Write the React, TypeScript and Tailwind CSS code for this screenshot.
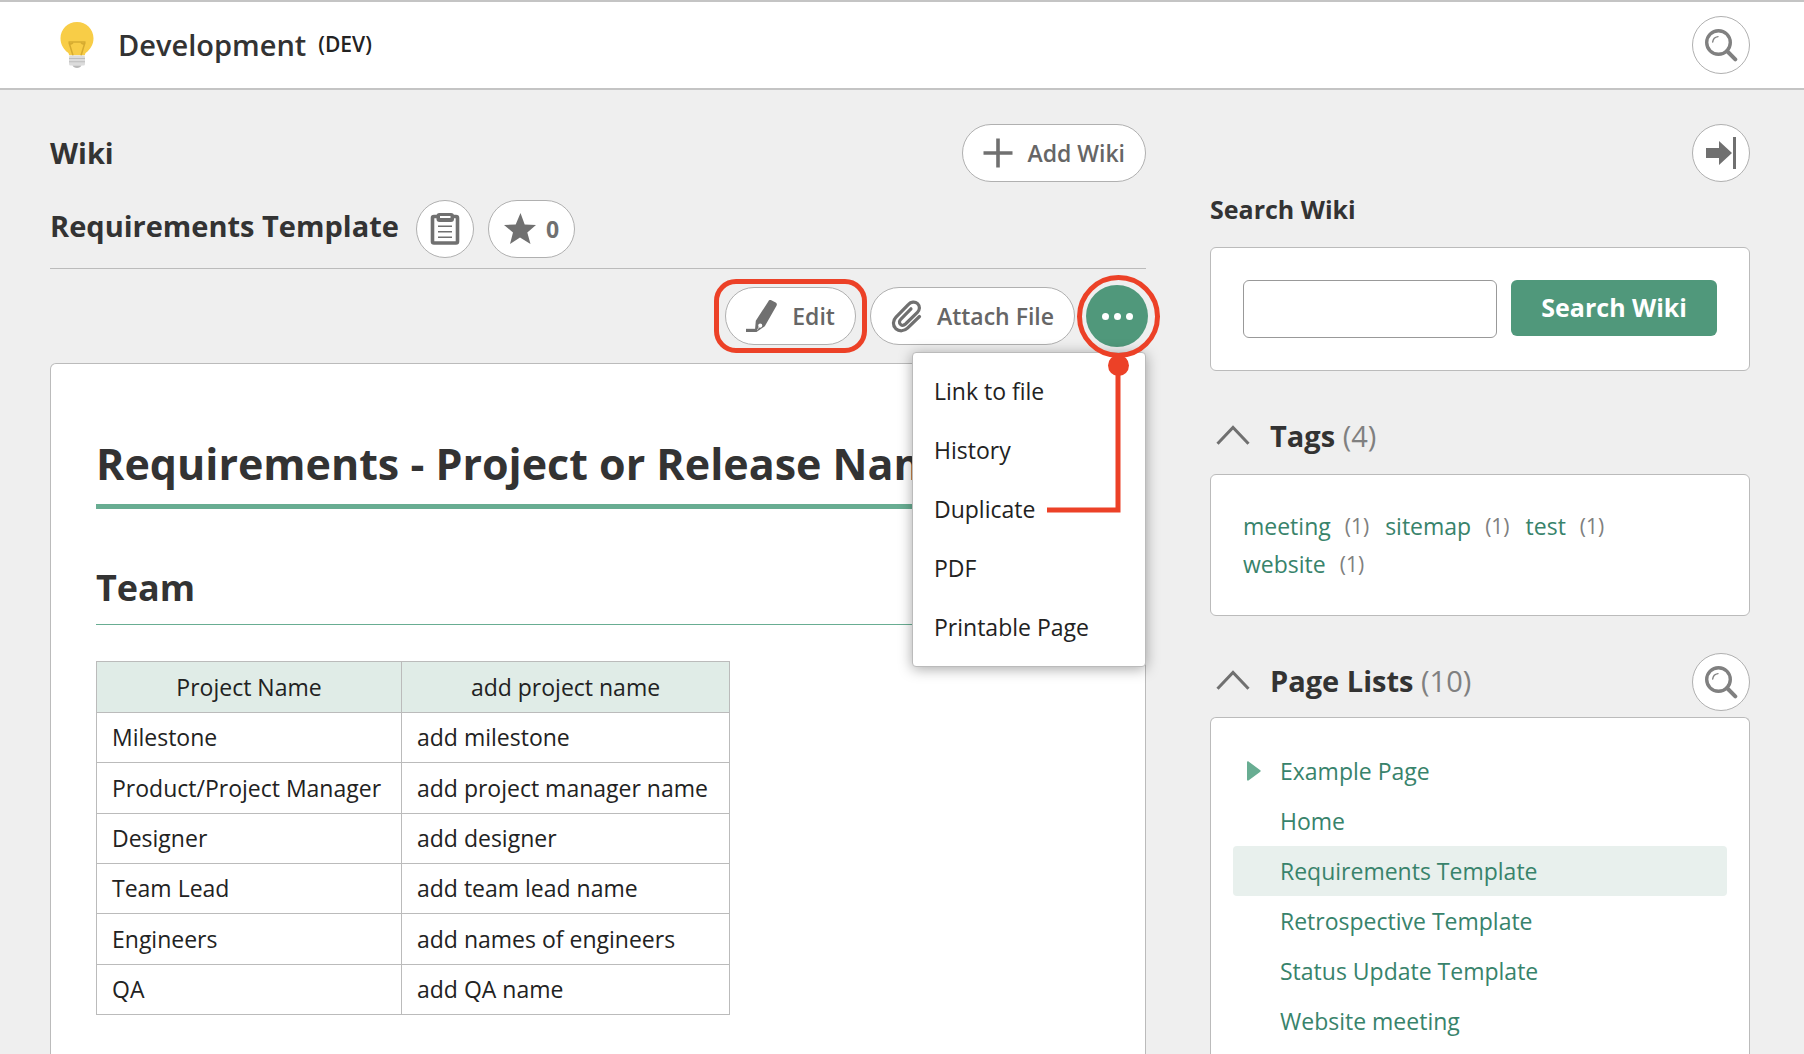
import type { ReactNode } from "react"

const TEAM_ROWS = [
  ["Milestone", "add milestone"],
  ["Product/Project Manager", "add project manager name"],
  ["Designer", "add designer"],
  ["Team Lead", "add team lead name"],
  ["Engineers", "add names of engineers"],
  ["QA", "add QA name"],
]

const MENU_ITEMS = ["Link to file", "History", "Duplicate", "PDF", "Printable Page"]

const TAGS = ["meeting", "sitemap", "test", "website"]

const PAGES = [
  { name: "Example Page", hasChildren: true },
  { name: "Home" },
  { name: "Requirements Template", active: true },
  { name: "Retrospective Template" },
  { name: "Status Update Template" },
  { name: "Website meeting" },
]

function BulbIcon() {
  return (
    <svg width="34" height="46" viewBox="0 0 34 46" aria-hidden="true">
      <path d="M17 0C7.600 0 .5 7.200 .5 16.300c0 6.700 3.600 11.500 7.300 14.300.9.700 1.200 1.500 1.200 2.700h16c0-1.200.3-2 1.200-2.700 3.700-2.800 7.300-7.600 7.300-14.300C33.500 7.200 26.400 0 17 0z" fill="#f8cd47" />
      <path d="M13 33.500L9 20.500q1.800 2.800 4 0M21 33.500l4-13q-1.800 2.800-4 0" fill="none" stroke="#d6ab30" strokeWidth="1.500" />
      <path d="M8.500 20h17" stroke="#d6ab30" strokeWidth="1.500" />
      <rect x="9" y="33.500" width="16" height="10" rx="1.500" fill="#dcdcdc" />
      <path d="M9 36.500h16M9 39.800h16" stroke="#bdbdbd" strokeWidth="1.100" />
      <path d="M12.500 43.500h9c-.8 1.600-2.200 2.400-4.500 2.400s-3.700-.8-4.500-2.400z" fill="#b9b9b9" />
    </svg>
  )
}

function SearchIcon() {
  return (
    <svg width="34" height="34" viewBox="0 0 34 34" fill="none" aria-hidden="true">
      <circle cx="14.500" cy="14.500" r="11.800" stroke="#808080" strokeWidth="3.400" />
      <path d="M8.700 14c.3-3 2.300-5 5.300-5.400" stroke="#808080" strokeWidth="1.400" strokeLinecap="round" />
      <path d="M23 23l8.300 8.300" stroke="#808080" strokeWidth="4" strokeLinecap="round" />
    </svg>
  )
}

function CollapseIcon() {
  return (
    <svg width="32" height="34" viewBox="0 0 32 34" fill="#707070" aria-hidden="true">
      <path d="M1 12h13V5l13 12-13 12v-7H1z" />
      <path d="M28 1h3v32h-3z" />
    </svg>
  )
}

function ClipboardIcon() {
  return (
    <svg width="30" height="34" viewBox="0 0 30 34" fill="none" aria-hidden="true">
      <rect x="2.500" y="4.500" width="25" height="26.500" rx="1.500" stroke="#707070" strokeWidth="3.600" />
      <rect x="6.500" y="1" width="17.500" height="9" rx="3" fill="#707070" />
      <rect x="10" y="4" width="10.500" height="2" fill="#fff" />
      <path d="M8 14.300h14M8 19.700h14M8 25.300h14" stroke="#707070" strokeWidth="1.500" />
    </svg>
  )
}

function StarIcon() {
  return (
    <svg width="32" height="32" viewBox="0 0 32 32" fill="#707070" aria-hidden="true">
      <path d="M16.500 0l4.200 11.500L32 12l-8.700 7.500L26.500 31 16 24.500 6 31l3-11.500L0 12l11.700-.5z" />
    </svg>
  )
}

function PlusIcon() {
  return (
    <svg width="30" height="30" viewBox="0 0 30 30" stroke="#707070" strokeWidth="3.600" aria-hidden="true">
      <path d="M15 .5v29M.5 15h29" />
    </svg>
  )
}

function PencilIcon() {
  return (
    <svg width="32" height="34" viewBox="0 0 32 34" fill="#707070" aria-hidden="true">
      <path d="M0 29.800h9V33H0z" />
      <path fillRule="evenodd" d="M22.300 2.400c.6-1.200 1.800-1.600 3-1.100l4.400 2.300c1.200.7 1.500 1.900.8 3.100L18.800 27.300 10.500 33H8.800l1-11.300zM14.200 24.500a2.100 2.100 0 0 0-2 2.100c0 .6.200 1 .5 1.400l-1.700 3 .3.200 1.800-2.700c.4.200.8.200 1.100.2a2.100 2.100 0 0 0 0-4.200z" />
    </svg>
  )
}

function ClipIcon() {
  return (
    <svg width="32" height="34" viewBox="0 0 32 34" fill="none" stroke="#707070" strokeWidth="3.200" strokeLinecap="round" aria-hidden="true">
      <path d="M28.500 17.500L16.500 29.200c-3.400 3.300-8.400 3.400-11.700.5-3.300-3.200-3.100-8.100.2-11.500L17.500 5.300c2.300-2.500 6.400-3.200 9.100-.7 2.700 2.600 2.200 6.300-.2 8.700L14.500 25c-1.500 1.400-3.600 1.600-5 .3-1.500-1.400-1.300-3.600.2-5L20 9.800" />
    </svg>
  )
}

function ChevronUpIcon() {
  return (
    <svg width="34" height="20" viewBox="0 0 34 20" fill="none" stroke="#707070" strokeWidth="3" aria-hidden="true">
      <path d="M1.500 18.700L17 2.500l15.500 16.200" />
    </svg>
  )
}

/* Ring around the "more" button plus the line that leads to "Duplicate" */
function MenuCallout() {
  return (
    <svg
      className="pointer-events-none absolute -top-[10px] -left-[39px] z-20"
      width="114"
      height="240"
      viewBox="0 0 114 240"
      fill="none"
      stroke="#ec4127"
      strokeWidth="5"
      aria-hidden="true"
    >
      <circle cx="71.500" cy="41.500" r="39" />
      <path d="M71 90v147.500M0 235h73.500" />
      <circle cx="71.500" cy="90.500" r="10.500" fill="#ec4127" stroke="none" />
    </svg>
  )
}

function RoundButton({ label, children }: { label: string; children: ReactNode }) {
  return (
    <button
      type="button"
      aria-label={label}
      className="flex size-[58px] shrink-0 cursor-pointer items-center justify-center rounded-full border border-[#b0b0b0] bg-white"
    >
      {children}
    </button>
  )
}

function PillButton({ icon, children }: { icon: ReactNode; children: ReactNode }) {
  return (
    <button
      type="button"
      className="flex h-[58px] cursor-pointer items-center gap-3.5 rounded-full border border-[#b0b0b0] bg-white px-5 text-[23px] leading-8 font-semibold whitespace-nowrap text-[#666]"
    >
      {icon}
      {children}
    </button>
  )
}

function SectionHeading({ title, count }: { title: string; count: number }) {
  return (
    <h3 className="flex items-center gap-5 pb-0.5 text-[29px] leading-10">
      <button type="button" aria-label={`Toggle ${title}`} className="mb-0.5 ml-1.5 cursor-pointer">
        <ChevronUpIcon />
      </button>
      <span className="font-bold text-[#333]">
        {title} <span className="font-normal text-[#808080]">({count})</span>
      </span>
    </h3>
  )
}

export default function App() {
  return (
    <div className="flex h-screen flex-col overflow-hidden bg-[#efefef] font-['Open_Sans','Noto_Sans',sans-serif] text-[23px] text-[#222]">
      <header className="flex h-[90px] shrink-0 items-center border-y-2 border-[#c4c4c4] bg-white pr-[54px] pl-[60px]">
        <BulbIcon />
        <div className="ml-6 flex flex-1 items-center gap-3">
          <span className="text-[29px] font-semibold text-[#333]">Development</span>
          <span className="text-[21px] font-semibold">(DEV)</span>
        </div>
        <RoundButton label="Search">
          <SearchIcon />
        </RoundButton>
      </header>

      <div className="flex min-h-0 flex-1 gap-16 pt-[34px] pr-[54px] pl-[50px]">
        <main className="flex min-w-0 flex-1 flex-col">
          <div className="flex items-center justify-between">
            <h1 className="text-[29px] leading-10 font-bold text-[#333]">Wiki</h1>
            <PillButton icon={<PlusIcon />}>Add Wiki</PillButton>
          </div>

          <div className="mt-[18px] flex items-center border-b border-[#bbb] pb-2.5">
            <h2 className="mr-[17px] pb-1.5 text-[29px] leading-10 font-bold text-[#333]">Requirements Template</h2>
            <RoundButton label="Copy page title">
              <ClipboardIcon />
            </RoundButton>
            <button
              type="button"
              className="ml-3.5 flex h-[58px] cursor-pointer items-center gap-2.5 rounded-full border border-[#b0b0b0] bg-white px-[15px] text-[23px] leading-8 font-bold text-[#707070]"
            >
              <StarIcon />
              0
            </button>
          </div>

          <div className="mt-4 -mr-[2px] flex items-center justify-end">
            <div className="relative mr-3.5">
              <PillButton icon={<PencilIcon />}>Edit</PillButton>
              <div className="pointer-events-none absolute -inset-x-[11px] -inset-y-[8px] rounded-[22px] border-5 border-[#ec4127]" />
            </div>
            <PillButton icon={<ClipIcon />}>Attach File</PillButton>
            <div className="relative ml-[11px]">
              <button
                type="button"
                aria-label="More"
                aria-expanded="true"
                className="flex size-[62px] cursor-pointer items-center justify-center gap-[5px] rounded-full bg-[#50987b]"
              >
                <span className="size-[7px] rounded-full bg-white" />
                <span className="size-[7px] rounded-full bg-white" />
                <span className="size-[7px] rounded-full bg-white" />
              </button>
              <ul className="absolute top-[67px] right-[2px] z-10 w-[234px] rounded border border-[#bbb] bg-white py-[9px] shadow-[0_2px_14px_rgba(0,0,0,0.35)]">
                {MENU_ITEMS.map((item) => (
                  <li key={item}>
                    <a href="#" className="block px-[21px] py-3 leading-[35px]">
                      {item}
                    </a>
                  </li>
                ))}
              </ul>
              <MenuCallout />
            </div>
          </div>

          <article className="mt-4 flex-1 rounded-t-md border border-b-0 border-[#bbb] bg-white px-[45px] pt-[70px]">
            <h1 className="border-b-5 border-[#68ad92] pb-2.5 text-[43px] leading-[60px] font-bold text-[#333]">
              Requirements - Project or Release Name
            </h1>
            <h2 className="mt-[54px] border-b border-[#68ad92] pb-[11px] text-4xl leading-[50px] font-bold text-[#333]">
              Team
            </h2>
            <table className="mt-9 h-[354px] border-collapse">
              <thead>
                <tr className="h-[51px] bg-[#e0ece7]">
                  <th className="w-[305px] border border-[#bbb] px-[15px] font-normal">Project Name</th>
                  <th className="w-[328px] border border-[#bbb] px-[15px] font-normal">add project name</th>
                </tr>
              </thead>
              <tbody>
                {TEAM_ROWS.map(([role, value]) => (
                  <tr key={role}>
                    <td className="border border-[#bbb] px-[15px]">{role}</td>
                    <td className="border border-[#bbb] px-[15px]">{value}</td>
                  </tr>
                ))}
              </tbody>
            </table>
          </article>
        </main>

        <aside className="flex w-[540px] shrink-0 flex-col">
          <div className="flex justify-end">
            <RoundButton label="Collapse sidebar">
              <CollapseIcon />
            </RoundButton>
          </div>

          <h3 className="mt-2.5 text-[25px] leading-[34px] font-bold text-[#333]">
            <label htmlFor="wiki-search">Search Wiki</label>
          </h3>
          <form className="mt-[21px] flex items-start gap-3.5 rounded-md border border-[#bbb] bg-white p-8">
            <input
              id="wiki-search"
              type="text"
              className="h-[58px] min-w-0 flex-1 rounded-md border border-[#999] bg-white px-3"
            />
            <button type="button" className="h-14 cursor-pointer rounded-md bg-[#50987b] px-[30px] text-[25px] font-bold text-white">
              Search Wiki
            </button>
          </form>

          <div className="mt-[37px] mb-2 flex h-[58px] items-center">
            <SectionHeading title="Tags" count={4} />
          </div>
          <div className="flex flex-wrap gap-x-4 rounded-md border border-[#bbb] bg-white py-8 pr-20 pl-8 leading-[38px]">
            {TAGS.map((tag) => (
              <span key={tag} className="flex items-center gap-3.5">
                <a href="#" className="text-[#38836b]">{tag}</a>
                <span className="text-[21px] text-[#808080]">(1)</span>
              </span>
            ))}
          </div>

          <div className="mt-[37px] mb-1.5 flex h-[58px] items-center justify-between">
            <SectionHeading title="Page Lists" count={10} />
            <RoundButton label="Search pages">
              <SearchIcon />
            </RoundButton>
          </div>
          <ul className="flex-1 rounded-t-md border border-b-0 border-[#bbb] bg-white px-[22px] pt-7">
            {PAGES.map((page) => (
              <li
                key={page.name}
                className={`flex h-[50px] items-center rounded pl-3.5 ${page.active ? "bg-[#e8f0ed]" : ""}`}
              >
                <span className="w-[33px]">
                  {page.hasChildren && (
                    <svg width="14" height="20" viewBox="0 0 14 20" fill="#68ad92" aria-hidden="true">
                      <path d="M0 1.500C0 .3 1 0 1.800.7l11.500 8.600c.5.400.5 1 0 1.400L1.800 19.300C1 20 0 19.700 0 18.500z" />
                    </svg>
                  )}
                </span>
                <a href="#" className="text-[#38836b]">{page.name}</a>
              </li>
            ))}
          </ul>
        </aside>
      </div>
    </div>
  )
}
